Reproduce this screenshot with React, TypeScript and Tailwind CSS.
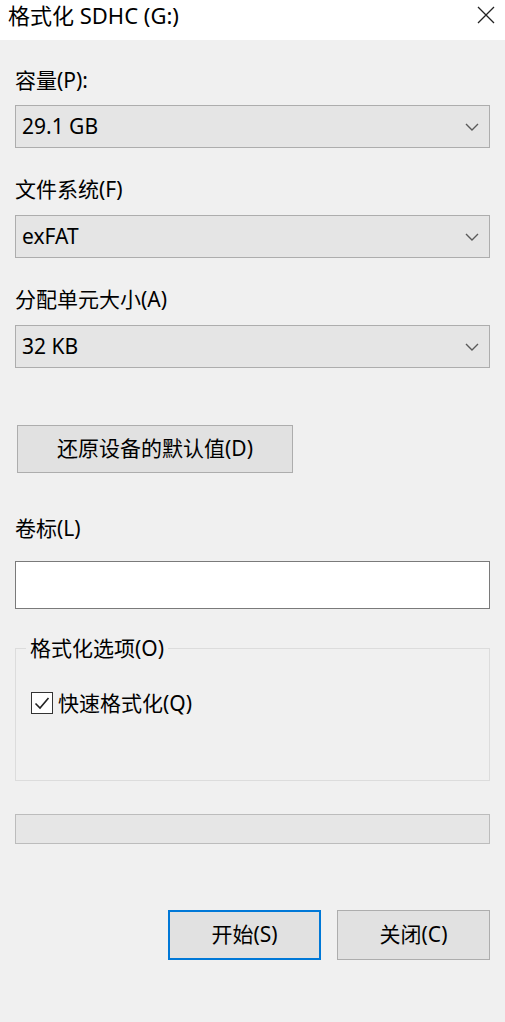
import React from "react";

const FONT = { fontFamily: '"Noto Sans", "Noto Sans CJK SC", sans-serif' };

function Chevron() {
  return (
    <svg width="14" height="8" viewBox="0 0 14 8" fill="none" className="shrink-0">
      <path d="M1 1l6 6 6-6" stroke="#5a5a5a" strokeWidth="1.4" />
    </svg>
  );
}

function Select({ value }: { value: string }) {
  return (
    <div className="flex h-[43px] items-center justify-between border border-[#adadad] bg-[#e5e5e5] pl-[6px] pr-[10px]">
      <span className="text-[21px] text-black">{value}</span>
      <Chevron />
    </div>
  );
}

function Label({ text, className = "" }: { text: string; className?: string }) {
  return <div className={"h-[24px] text-[21px] leading-[24px] text-black " + className}>{text}</div>;
}

export default function App() {
  return (
    <div style={FONT} className="flex h-[1022px] w-[505px] flex-col bg-[#f0f0f0]">
      <div className="flex h-[40px] items-start justify-between bg-white pl-[8px] pr-[10px] pt-[3px]">
        <span className="text-[22px] leading-[24px] text-black">格式化 SDHC (G:)</span>
        <svg width="18" height="18" viewBox="0 0 18 18" className="mt-[3px]">
          <path d="M1 1l16 16M17 1L1 17" stroke="#222" strokeWidth="1.3" />
        </svg>
      </div>

      <div className="flex flex-col px-[15px]">
        <Label text="容量(P):" className="mt-[28px]" />
        <div className="mt-[13px]">
          <Select value="29.1 GB" />
        </div>

        <Label text="文件系统(F)" className="mt-[29px]" />
        <div className="mt-[14px]">
          <Select value="exFAT" />
        </div>

        <Label text="分配单元大小(A)" className="mt-[29px]" />
        <div className="mt-[14px]">
          <Select value="32 KB" />
        </div>

        <div className="ml-[2px] mt-[57px] flex h-[48px] w-[276px] items-center justify-center border border-[#adadad] bg-[#e1e1e1] text-[21px] text-black">
          还原设备的默认值(D)
        </div>

        <Label text="卷标(L)" className="mt-[43px]" />
        <div className="mt-[21px] h-[48px] border border-[#7a7a7a] bg-white" />

        <div className="relative mt-[39px] h-[133px] border border-[#dcdcdc]">
          <div className="absolute left-[10px] top-[-13px] bg-[#f0f0f0] px-[4px] text-[21px] leading-[24px] text-black">
            格式化选项(O)
          </div>
          <div className="mt-[42px] ml-[15px] flex items-center gap-[5px]">
            <div className="flex h-[22px] w-[22px] items-center justify-center border border-[#333] bg-white">
              <svg width="16" height="14" viewBox="0 0 16 14" fill="none">
                <path d="M1.5 7.5l4.5 4.5 8.5-10" stroke="#222" strokeWidth="1.6" />
              </svg>
            </div>
            <span className="text-[21px] leading-[24px] text-black">快速格式化(Q)</span>
          </div>
        </div>

        <div className="mt-[33px] h-[30px] border border-[#bcbcbc] bg-[#e6e6e6]" />

        <div className="mt-[66px] flex justify-end gap-[16px]">
          <div className="flex h-[50px] w-[153px] items-center justify-center border-2 border-[#0078d7] bg-[#e1e1e1] text-[21px] text-black">
            开始(S)
          </div>
          <div className="flex h-[50px] w-[153px] items-center justify-center border border-[#adadad] bg-[#e1e1e1] text-[21px] text-black">
            关闭(C)
          </div>
        </div>
      </div>
    </div>
  );
}
